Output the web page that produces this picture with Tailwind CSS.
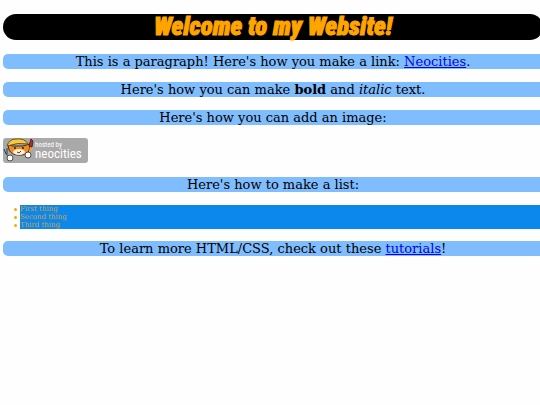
<!DOCTYPE html>
<html lang="en">
<head>
    <meta charset="UTF-8">
    <meta name="viewport" content="width=device-width, initial-scale=1.0">
    <title>Welcome to my Website!</title>
    <script src="https://cdn.jsdelivr.net/npm/@tailwindcss/browser@4"></script>
</head>
<body class="bg-[#fefefe] overflow-x-hidden font-['DejaVu_Serif',serif] text-[13px] leading-[15px] text-black">
    <main class="ml-[3px] -mr-[3px] pt-[14px] flex flex-col gap-[13px]">
        <h1 class="mb-px rounded-full bg-black text-center font-['Impact','Roboto_Condensed','Open_Sans_Condensed','Roboto',sans-serif] text-[25px] leading-[26px] font-black italic text-[#ffa500] [-webkit-text-stroke:1px_#ffa500]">Welcome to my Website!</h1>

        <p class="rounded-l-[5px] bg-[#80bdff] text-center">This is a paragraph! Here's how you make a link: <a href="https://neocities.org" class="text-[#0000ee] underline">Neocities</a>.</p>

        <p class="rounded-l-[5px] bg-[#80bdff] text-center">Here's how you can make <strong>bold</strong> and <em>italic</em> text.</p>

        <p class="rounded-l-[5px] bg-[#80bdff] text-center">Here's how you can add an image:</p>

        <svg class="w-[85px] h-[26px]" viewBox="0 0 85 26" role="img" aria-label="Hosted by Neocities">
            <rect y="0" width="85" height="25" rx="3" fill="#aaa9a9"/>
            <!-- cat with a hat -->
            <path d="M6 12 L5 6 L9 8 L20 8 L27 6 L26 13 Q22 18 15 17 Q9 17 6 12Z" fill="#f28b22" stroke="#3c3028" stroke-width="1"/>
            <path d="M4 8 Q6 1 13 1 Q22 0 25 6 Q15 4 4 8Z" fill="#f5ca3d" stroke="#6b5420" stroke-width="1"/>
            <ellipse cx="16" cy="14" rx="6" ry="3" fill="#fff0d8"/>
            <circle cx="12" cy="10" r="1" fill="#28231f"/>
            <circle cx="20" cy="10" r="1" fill="#28231f"/>
            <path d="M14 14 L16 15 L18 13" fill="none" stroke="#54331f"/>
            <!-- fork and brush -->
            <path d="M1 11 L3 16 L8 20 M4 10 L4 16" fill="none" stroke="#26394c" stroke-width="1"/>
            <circle cx="7" cy="20" r="3" fill="#fff" stroke="#514b48"/>
            <path d="M28 8 L26 20" stroke="#e8a13c" stroke-width="2"/>
            <path d="M26 8 L28 1 L30 3 L29 9Z" fill="#b82d24" stroke="#54251f"/>
            <circle cx="25" cy="17" r="3" fill="#fff" stroke="#514b48"/>
            <g fill="#fff" font-family="Roboto Condensed, Open Sans, sans-serif">
                <text x="32" y="9" font-size="7">hosted by</text>
                <text x="32" y="20" font-size="13">neocities</text>
            </g>
        </svg>

        <p class="rounded-l-[5px] bg-[#80bdff] text-center">Here's how to make a list:</p>

        <ul class="ml-[17px] -mb-px bg-[#0c87eb] text-[7px] leading-[8px] text-[#c9a545]">
            <li class="relative before:absolute before:-left-[6px] before:top-[3px] before:size-[3px] before:rounded-full before:bg-[#ffa500]">First thing</li>
            <li class="relative before:absolute before:-left-[6px] before:top-[3px] before:size-[3px] before:rounded-full before:bg-[#ffa500]">Second thing</li>
            <li class="relative before:absolute before:-left-[6px] before:top-[3px] before:size-[3px] before:rounded-full before:bg-[#ffa500]">Third thing</li>
        </ul>

        <p class="rounded-l-[5px] bg-[#80bdff] text-center">To learn more HTML/CSS, check out these <a href="https://neocities.org/tutorials" class="text-[#0000ee] underline">tutorials</a>!</p>
    </main>
</body>
</html>
